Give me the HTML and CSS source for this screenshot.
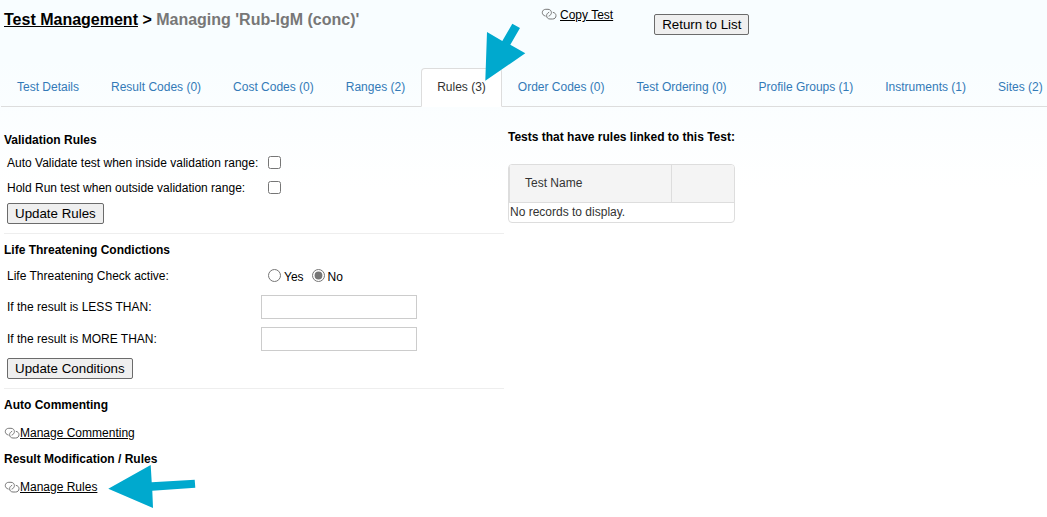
FILE: index.html
```html
<!DOCTYPE html>
<html lang="en">
<head>
<meta charset="utf-8">
<title>Test Management</title>
<link rel="stylesheet" href="styles.css">
</head>
<body>
<svg class="symbols" aria-hidden="true">
  <symbol id="link" viewBox="0 0 16 12">
    <g fill="none" stroke="currentColor" stroke-width="1" stroke-linecap="round">
      <path d="M4.2 8C2.4 7.5 1.3 6.3 1.3 4.6C1.3 2.6 2.8 1.3 4.8 1.3H7C9 1.3 10.4 2.7 10.4 4.6C10.4 6.2 9.5 7.4 8 8"/>
      <path d="M7.8 4.4C6.4 5 5.6 6.2 5.6 7.7C5.6 9.7 7 11 9 11H11.6C13.6 11 15 9.7 15 7.7C15 6 14 4.8 12.2 4.4"/>
    </g>
  </symbol>
</svg>
<header class="page-header">
  <h1 class="title"><a class="link" href="#tests">Test Management</a> &gt; <span class="current">Managing 'Rub-IgM (conc)'</span></h1>
  <div class="actions">
    <div class="copy"><svg class="icon"><use href="#link"/></svg><a class="link" href="#copy">Copy Test</a></div>
    <button class="button" type="button">Return to List</button>
  </div>
</header>
<nav class="tabs">
  <a class="tab" href="#details">Test Details</a>
  <a class="tab" href="#results">Result Codes (0)</a>
  <a class="tab" href="#costs">Cost Codes (0)</a>
  <a class="tab" href="#ranges">Ranges (2)</a>
  <a class="tab tab-active" href="#rules" aria-current="page">Rules (3)</a>
  <a class="tab" href="#orders">Order Codes (0)</a>
  <a class="tab" href="#ordering">Test Ordering (0)</a>
  <a class="tab" href="#profiles">Profile Groups (1)</a>
  <a class="tab" href="#instruments">Instruments (1)</a>
  <a class="tab" href="#sites">Sites (2)</a>
</nav>
<main class="content">
  <div class="settings">
    <form class="section">
      <h2 class="heading">Validation Rules</h2>
      <div class="row"><label class="label" for="auto">Auto Validate test when inside validation range:</label><input class="check" id="auto" type="checkbox"></div>
      <div class="row"><label class="label" for="hold">Hold Run test when outside validation range:</label><input class="check" id="hold" type="checkbox"></div>
      <button class="button submit" type="button">Update Rules</button>
    </form>
    <form class="section">
      <h2 class="heading">Life Threatening Condictions</h2>
      <div class="row row-radio" role="radiogroup" aria-labelledby="active"><span class="label" id="active">Life Threatening Check active:</span>
        <input class="radio" id="yes" name="active" type="radio"><label class="choice" for="yes">Yes</label>
        <input class="radio" id="no" name="active" type="radio" checked><label class="choice" for="no">No</label>
      </div>
      <div class="row row-field"><label class="label" for="less">If the result is LESS THAN:</label><input class="field" id="less" type="text"></div>
      <div class="row row-field"><label class="label" for="more">If the result is MORE THAN:</label><input class="field" id="more" type="text"></div>
      <button class="button submit" type="button">Update Conditions</button>
    </form>
    <section class="links">
      <h2 class="heading">Auto Commenting</h2>
      <div class="manage"><svg class="icon"><use href="#link"/></svg><a class="link" href="#commenting">Manage Commenting</a></div>
      <h2 class="heading">Result Modification / Rules</h2>
      <div class="manage"><svg class="icon"><use href="#link"/></svg><a class="link" href="#manage-rules">Manage Rules</a></div>
    </section>
  </div>
  <section class="linked">
    <h2 class="heading">Tests that have rules linked to this Test:</h2>
    <div class="grid">
      <table class="table">
        <thead><tr><th class="name" scope="col">Test Name</th><th class="extra"></th></tr></thead>
        <tbody><tr><td class="empty" colspan="2">No records to display.</td></tr></tbody>
      </table>
    </div>
  </section>
</main>
<svg class="arrow arrow-tab" viewBox="485 23 42 59" aria-hidden="true"><path d="M512.3 23.7 520 28 510.3 44.7 525.3 53.3 485.3 80.7 487 32 502.3 41Z"/></svg>
<svg class="arrow arrow-manage" viewBox="108 464 88 45" aria-hidden="true"><path d="M108.3 488.7 150.7 465 151.7 482.3 194.7 479.7 195.3 487.7 152.3 490.7 153 508Z"/></svg>
</body>
</html>
```
FILE: styles.css
```css
* { box-sizing: border-box; }
body {
  margin: 0;
  min-height: 100vh;
  position: relative;
  background: #fff linear-gradient(#f8fdff 0, #f8fdff 60px, #fff 190px) no-repeat;
  color: #000;
  font: 12px/16px "Liberation Sans", Arial, sans-serif;
  overflow-x: hidden;
}
.symbols { display: none; }
.link { color: inherit; text-decoration: underline; }
.icon { width: 16px; height: 12px; color: #777; flex: none; }
.page-header {
  display: grid;
  grid-template-columns: 537px 1fr;
  height: 68px;
  padding: 7px 4px 0;
}
.title { margin: 0; padding-top: 3px; font-size: 16px; line-height: 20px; }
.current { color: #777; }
.actions { display: flex; align-items: flex-start; gap: 41px; }
.copy { display: flex; gap: 3px; }
.copy .icon { margin-top: 1px; }
.button {
  height: 21px;
  padding: 0 7px;
  border: 1px solid #6b6b6b;
  border-radius: 2px;
  background: #efefef;
  color: #000;
  font-family: "Liberation Sans", Arial, sans-serif;
}
.actions .button { margin-top: 7px; }
.tabs {
  display: flex;
  margin-left: 1px;
  overflow: hidden;
  box-shadow: inset 0 -1px #ddd;
  white-space: nowrap;
}
.tab {
  flex: none;
  height: 39px;
  padding: 10px 15px;
  border: 1px solid transparent;
  border-radius: 4px 4px 0 0;
  color: #337ab7;
  text-decoration: none;
}
.tab-active { border-color: #ddd #ddd #fff; background: #fff; color: #333; }
.content { display: flex; gap: 4px; padding: 0 4px; }
.settings { width: 500px; padding-top: 25px; }
.heading { margin: 0; font-size: 12px; line-height: 16px; }
.section { margin-bottom: 8px; padding-bottom: 9px; border-bottom: 1px solid #eee; }
.row { display: flex; align-items: center; height: 25px; padding-left: 3px; }
.section .heading { margin-bottom: 2px; }
.label { width: 254px; }
.check { width: 13px; height: 13px; margin: 0 0 0 7px; }
.submit { display: block; margin: 3px 0 0 3px; }
.row-radio { height: 31px; }
.radio { width: 13px; height: 13px; margin: 0 3px 0 7px; accent-color: #767676; }
.choice { padding-top: 3px; }
.choice + .radio { margin-left: 8px; }
.row-field { height: 32px; }
.field {
  width: 156px;
  height: 24px;
  padding: 2px 4px;
  border: 1px solid #ccc;
  background: #fff;
  font: inherit;
}
.manage { display: flex; align-items: center; padding: 12px 0 10px; }
.linked { padding-top: 22px; }
.grid {
  width: 227px;
  margin-top: 19px;
  border: 1px solid #ddd;
  border-radius: 4px;
  background: #fff;
  color: #333;
  overflow: hidden;
}
.table { width: 100%; border-collapse: separate; border-spacing: 0; table-layout: fixed; }
.name, .extra {
  height: 38px;
  padding: 0 16px 2px;
  border-bottom: 1px solid #ddd;
  border-right: 1px solid #ddd;
  background: #f4f4f4;
  font-weight: normal;
  text-align: left;
}
.name { width: 163px; border-left: 1px solid #ddd; padding-left: 15px; }
.extra { border-right: 0; }
.empty { height: 19px; padding: 0 1px 2px; }
.arrow { position: absolute; fill: #00a9ce; }
.arrow-tab { left: 485px; top: 23px; width: 42px; height: 59px; }
.arrow-manage { left: 108px; top: 464px; width: 88px; height: 45px; }
```
